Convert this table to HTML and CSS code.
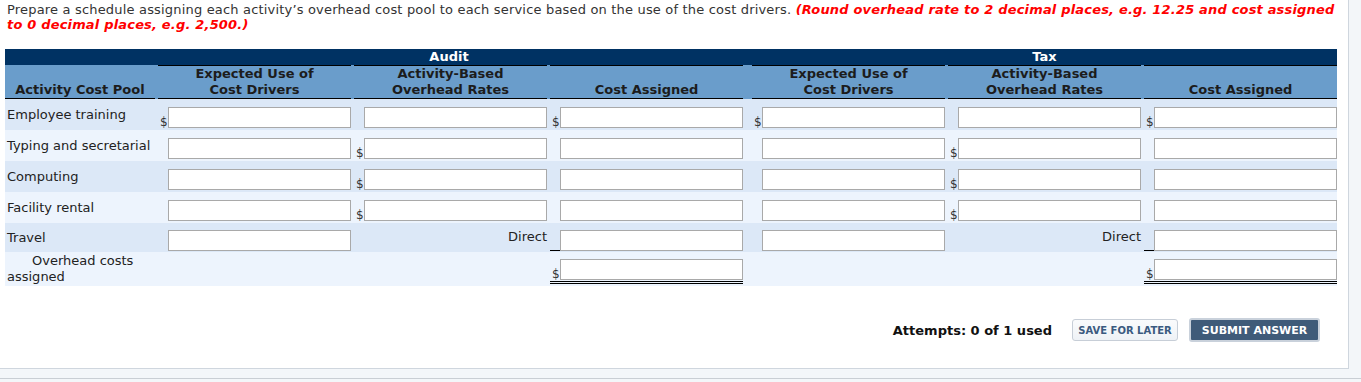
FILE: index.html
```html
<!DOCTYPE html>
<html lang="en">
<head>
<meta charset="utf-8">
<title>Schedule</title>
<link rel="stylesheet" href="styles.css">
</head>
<body>
<div class="page">
  <p class="prompt">Prepare a schedule assigning each activity’s overhead cost pool to each service based on the use of the cost drivers. <em class="note">(Round overhead rate to 2 decimal places, e.g. 12.25 and cost assigned<br>to 0 decimal places, e.g. 2,500.)</em></p>

  <table class="sched">
    <colgroup>
      <col class="w1"><col class="w2"><col class="w2"><col class="w2"><col class="w5"><col class="w2"><col class="w2">
    </colgroup>
    <thead>
      <tr class="grp">
        <th></th>
        <th colspan="3">Audit</th>
        <th colspan="3" class="gtax">Tax</th>
      </tr>
      <tr class="cols">
        <th class="first"><div class="hd">Activity Cost Pool</div></th>
        <th><div class="hd">Expected Use of<br>Cost Drivers</div></th>
        <th><div class="hd">Activity-Based<br>Overhead Rates</div></th>
        <th><div class="hd">Cost Assigned</div></th>
        <th class="wide"><div class="hd">Expected Use of<br>Cost Drivers</div></th>
        <th><div class="hd">Activity-Based<br>Overhead Rates</div></th>
        <th><div class="hd">Cost Assigned</div></th>
      </tr>
    </thead>
    <tbody>
      <tr class="odd">
        <td class="lbl">Employee training</td>
        <td class="in"><div class="fld"><span class="cur">$</span><input type="text"></div></td>
        <td class="in"><div class="fld"><span class="cur"></span><input type="text"></div></td>
        <td class="in"><div class="fld"><span class="cur">$</span><input type="text"></div></td>
        <td class="in wide"><div class="fld"><span class="cur">$</span><input type="text"></div></td>
        <td class="in"><div class="fld"><span class="cur"></span><input type="text"></div></td>
        <td class="in"><div class="fld"><span class="cur">$</span><input type="text"></div></td>
      </tr>
      <tr class="even">
        <td class="lbl">Typing and secretarial</td>
        <td class="in"><div class="fld"><span class="cur"></span><input type="text"></div></td>
        <td class="in"><div class="fld"><span class="cur">$</span><input type="text"></div></td>
        <td class="in"><div class="fld"><span class="cur"></span><input type="text"></div></td>
        <td class="in wide"><div class="fld"><span class="cur"></span><input type="text"></div></td>
        <td class="in"><div class="fld"><span class="cur">$</span><input type="text"></div></td>
        <td class="in"><div class="fld"><span class="cur"></span><input type="text"></div></td>
      </tr>
      <tr class="odd">
        <td class="lbl">Computing</td>
        <td class="in"><div class="fld"><span class="cur"></span><input type="text"></div></td>
        <td class="in"><div class="fld"><span class="cur">$</span><input type="text"></div></td>
        <td class="in"><div class="fld"><span class="cur"></span><input type="text"></div></td>
        <td class="in wide"><div class="fld"><span class="cur"></span><input type="text"></div></td>
        <td class="in"><div class="fld"><span class="cur">$</span><input type="text"></div></td>
        <td class="in"><div class="fld"><span class="cur"></span><input type="text"></div></td>
      </tr>
      <tr class="even">
        <td class="lbl">Facility rental</td>
        <td class="in"><div class="fld"><span class="cur"></span><input type="text"></div></td>
        <td class="in"><div class="fld"><span class="cur">$</span><input type="text"></div></td>
        <td class="in"><div class="fld"><span class="cur"></span><input type="text"></div></td>
        <td class="in wide"><div class="fld"><span class="cur"></span><input type="text"></div></td>
        <td class="in"><div class="fld"><span class="cur">$</span><input type="text"></div></td>
        <td class="in"><div class="fld"><span class="cur"></span><input type="text"></div></td>
      </tr>
      <tr class="odd travel">
        <td class="lbl">Travel</td>
        <td class="in"><div class="fld"><span class="cur"></span><input type="text"></div></td>
        <td class="direct">Direct</td>
        <td class="in"><div class="fld single"><span class="cur"></span><input type="text"></div></td>
        <td class="in wide"><div class="fld"><span class="cur"></span><input type="text"></div></td>
        <td class="direct">Direct</td>
        <td class="in"><div class="fld single"><span class="cur"></span><input type="text"></div></td>
      </tr>
      <tr class="even total">
        <td class="lbl tot">Overhead costs assigned</td>
        <td></td>
        <td></td>
        <td class="in"><div class="fld double"><span class="cur">$</span><input type="text"></div></td>
        <td class="wide"></td>
        <td></td>
        <td class="in"><div class="fld double"><span class="cur">$</span><input type="text"></div></td>
      </tr>
    </tbody>
  </table>

  <div class="footer">
    <span class="attempts">Attempts: 0 of 1 used</span>
    <button class="btn save" type="button">SAVE FOR LATER</button>
    <button class="btn submit" type="button">SUBMIT ANSWER</button>
  </div>
</div>
<div class="strip"></div>
</body>
</html>
```

FILE: styles.css
```css
html, body {
  margin: 0;
  padding: 0;
}
body {
  background: #f3f6f9;
  font-family: "DejaVu Sans", Verdana, sans-serif;
  font-size: 13px;
  color: #333;
}
.page {
  background: #fff;
  width: 1349px;
  height: 369px;
  border-right: 1px solid #cfd6de;
  border-bottom: 1px solid #cfd6de;
  box-sizing: border-box;
  padding: 2px 0 0 7px;
}
.prompt {
  margin: 0;
  line-height: 15px;
  width: 1340px;
  letter-spacing: 0.18px;
  white-space: nowrap;
}
.note {
  color: #f00;
  font-weight: bold;
  font-style: italic;
}
.sched {
  margin: 17px 0 0 -2px;
  border-collapse: separate;
  border-spacing: 0;
  table-layout: fixed;
  width: 1332px;
}
.w1 { width: 150px; }
.w2 { width: 196px; }
.w5 { width: 202px; }
.sched th {
  padding: 0;
  font-weight: bold;
  text-align: center;
}
.grp th {
  background: #003263;
  color: #fff;
  height: 16px;
  line-height: 16px;
}
.grp .gtax { padding-left: 9px; }
.cols th {
  background: #6a9dcb;
  color: #1c1c1c;
  padding-left: 3px;
  vertical-align: bottom;
}
.cols th.first { padding-left: 0; }
.cols th.wide { padding-left: 9px; }
.hd {
  border-top: 1px solid #000;
  border-bottom: 1px solid #000;
  line-height: 16px;
  height: 32px;
  display: flex;
  align-items: flex-end;
  justify-content: center;
}
.first .hd { border-top-color: transparent; }
.odd td { background: #dce8f7; }
.even td { background: #edf4fd; }
.sched td {
  padding: 8px 0 2px 3px;
  vertical-align: top;
  line-height: 16px;
}
.sched td.wide { padding-left: 9px; }
.sched td.lbl {
  padding-left: 2px;
  color: #222;
  white-space: nowrap;
}
.sched td.lbl.tot {
  white-space: normal;
  text-indent: 25px;
  vertical-align: middle;
  padding-top: 1px;
  padding-bottom: 1px;
}
.fld {
  display: flex;
  align-items: flex-end;
  width: 193px;
}
.cur {
  width: 10px;
  flex: none;
  box-sizing: border-box;
  padding-left: 2px;
  font-size: 12px;
  line-height: 12px;
  color: #333;
}
.fld input {
  width: 183px;
  height: 21px;
  box-sizing: border-box;
  border: 1px solid #a9a9a9;
  margin: 0;
  padding: 0 3px;
  background: #fff;
  font: inherit;
}
.travel td {
  padding-top: 7px;
  padding-bottom: 1px;
}
.sched td.direct {
  text-align: right;
  color: #222;
  padding-top: 6px;
}
.fld.single {
  border-bottom: 1px solid #000;
}
.fld.single input {
  margin-bottom: -1px;
}
.total td {
  padding-top: 7px;
  padding-bottom: 2px;
}
.fld.double {
  border-bottom: 3px double #000;
  padding-bottom: 1px;
}
.footer {
  display: flex;
  justify-content: flex-end;
  align-items: center;
  margin-top: 32px;
  padding-right: 28px;
}
.attempts {
  font-weight: bold;
  color: #111;
  margin-right: 20px;
}
.btn {
  font-family: "DejaVu Sans", Verdana, sans-serif;
  font-weight: bold;
  cursor: pointer;
  box-sizing: border-box;
}
.save {
  width: 106px;
  height: 22px;
  font-size: 10px;
  color: #3b5a80;
  background: linear-gradient(#fafbfc, #eef2f6);
  border: 1px solid #c7ced7;
  border-radius: 3px;
  margin-right: 11px;
  padding: 0;
}
.submit {
  width: 131px;
  height: 24px;
  font-size: 11px;
  color: #fff;
  background: #3f5b79;
  border: 2px solid #c9d1db;
  border-radius: 3px;
  padding: 0;
}
.strip {
  height: 10px;
  border-bottom: 1px solid #c9ced4;
  box-sizing: border-box;
}
```
